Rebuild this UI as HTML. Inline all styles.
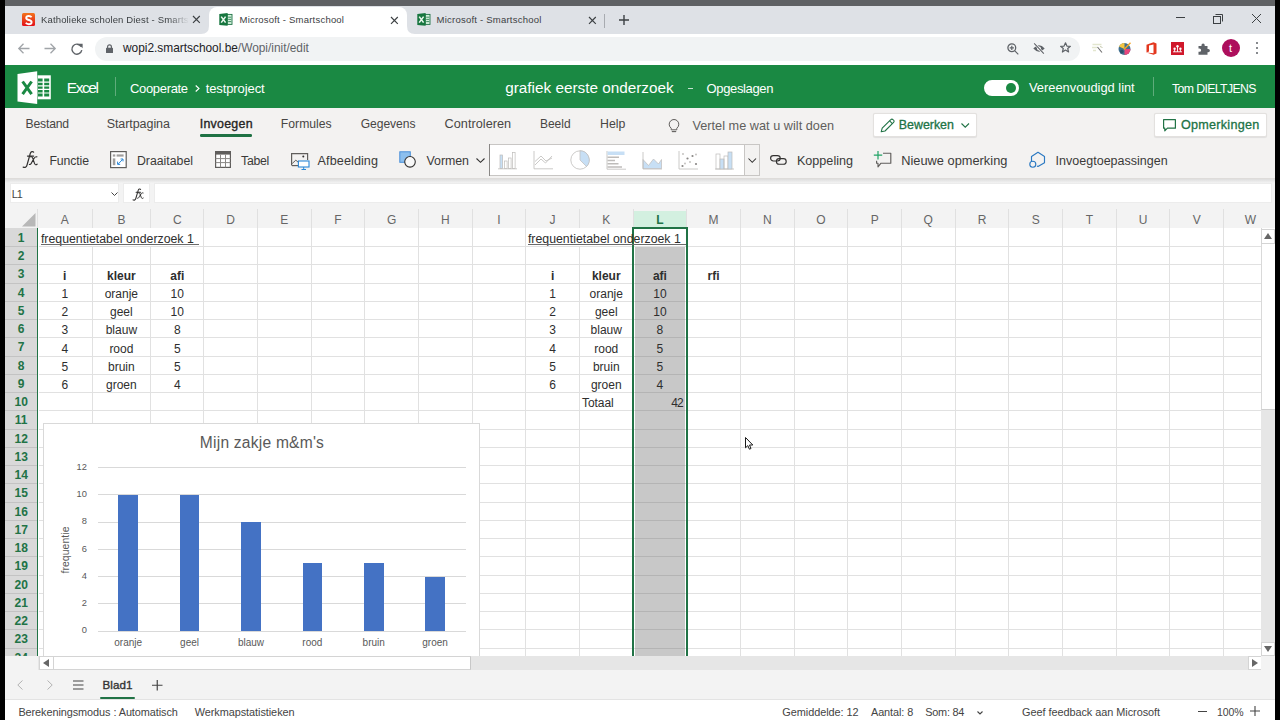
<!DOCTYPE html><html><head><meta charset="utf-8"><style>
html,body{margin:0;padding:0;width:1280px;height:720px;overflow:hidden;background:#fff;position:relative;font-family:"Liberation Sans",sans-serif;}
.t{position:absolute;white-space:pre;line-height:1;}
.r{position:absolute;}
svg{position:absolute;overflow:visible;}
</style></head><body>
<div class="r" style="left:0.00px;top:0.00px;width:1280.00px;height:6.00px;background:#5f6164;"></div>
<div class="r" style="left:5.00px;top:6.00px;width:1270.00px;height:28.00px;background:#dee1e6;"></div>
<div class="r" style="left:5.00px;top:34.00px;width:1270.00px;height:31.00px;background:#ffffff;"></div>
<div class="r" style="left:95.00px;top:37.00px;width:985.00px;height:23.50px;background:#f1f3f4;border-radius:12px;"></div>
<div class="r" style="left:209.00px;top:7.00px;width:198.00px;height:27.00px;background:#ffffff;border-radius:8px 8px 0 0;"></div>
<svg style="left:201px;top:26px" width="8" height="8"><path d="M0 8 Q8 8 8 0 L8 8 Z" fill="#fff"/></svg>
<svg style="left:407px;top:26px" width="8" height="8"><path d="M8 8 Q0 8 0 0 L0 8 Z" fill="#fff"/></svg>
<div class="r" style="left:21.50px;top:13.00px;width:13.50px;height:13.00px;background:linear-gradient(#f3741c,#e3101a);border-radius:1.5px;"></div>
<svg style="left:21.5px;top:13px" width="13.5" height="13"><path d="M9.6 4.2C9 3.4 8 3 6.8 3C5.2 3 4.2 3.8 4.2 5C4.2 7.6 9.6 6.4 9.6 9.2C9.6 10.5 8.4 11.2 6.8 11.2C5.5 11.2 4.4 10.7 3.8 9.8" fill="none" stroke="#fff" stroke-width="1.9"/></svg>
<div class="t" style="left:41.00px;top:14.96px;font-size:9.5px;color:#3c4043;font-weight:normal;letter-spacing:0.155px;width:150px;overflow:hidden;-webkit-mask-image:linear-gradient(90deg,#000 128px,transparent 148px);">Katholieke scholen Diest - Smartschool</div>
<svg style="left:193.3px;top:16.4px" width="6.8" height="6.8"><path d="M0 0L6.8 6.8M6.8 0L0 6.8" stroke="#3c4043" stroke-width="1.15"/></svg>
<svg style="left:391.1px;top:16.6px" width="6.8" height="6.8"><path d="M0 0L6.8 6.8M6.8 0L0 6.8" stroke="#3c4043" stroke-width="1.15"/></svg>
<svg style="left:588.6px;top:16.6px" width="6.8" height="6.8"><path d="M0 0L6.8 6.8M6.8 0L0 6.8" stroke="#3c4043" stroke-width="1.15"/></svg>
<svg style="left:219.2px;top:13.2px" width="14" height="13" viewBox="0 0 14 13"><rect x="8.2" y="1.4" width="4.8" height="10" fill="#d4f2dc" stroke="#1e7145" stroke-width="0.9"/><path d="M9.2 4.2h3M9.2 6.4h3M9.2 8.6h3" stroke="#1e7145" stroke-width="0.8"/><path d="M0.3 0.9 L8.6 0.1 V12.8 L0.3 12.1 Z" fill="#17763f"/><path d="M2.2 3.6L6.6 9.6M6.6 3.6L2.2 9.6" stroke="#eaf7ed" stroke-width="1.6"/></svg>
<svg style="left:417px;top:13.2px" width="14" height="13" viewBox="0 0 14 13"><rect x="8.2" y="1.4" width="4.8" height="10" fill="#d4f2dc" stroke="#1e7145" stroke-width="0.9"/><path d="M9.2 4.2h3M9.2 6.4h3M9.2 8.6h3" stroke="#1e7145" stroke-width="0.8"/><path d="M0.3 0.9 L8.6 0.1 V12.8 L0.3 12.1 Z" fill="#17763f"/><path d="M2.2 3.6L6.6 9.6M6.6 3.6L2.2 9.6" stroke="#eaf7ed" stroke-width="1.6"/></svg>
<div class="t" style="left:239.50px;top:14.96px;font-size:9.5px;color:#3c4043;font-weight:normal;letter-spacing:0.214px;">Microsoft - Smartschool</div>
<div class="t" style="left:436.60px;top:14.96px;font-size:9.5px;color:#3c4043;font-weight:normal;letter-spacing:0.223px;">Microsoft - Smartschool</div>
<div class="r" style="left:604.30px;top:13.50px;width:1.00px;height:14.00px;background:#a8abb0;"></div>
<svg style="left:618.5px;top:15px" width="10" height="10"><path d="M5 0V10M0 5H10" stroke="#3c4043" stroke-width="1.4"/></svg>
<div class="r" style="left:1176.40px;top:17.30px;width:9.00px;height:1.00px;background:#3c4043;"></div>
<svg style="left:1213px;top:13.5px" width="10" height="10"><rect x="0.5" y="2.5" width="7" height="7" fill="none" stroke="#3c4043" stroke-width="1"/><path d="M2.5 0.5H9.5V7.5" fill="none" stroke="#3c4043" stroke-width="1"/></svg>
<svg style="left:1251.5px;top:14px" width="9" height="9"><path d="M0 0L9 9M9 0L0 9" stroke="#3c4043" stroke-width="1"/></svg>
<svg style="left:18px;top:43px" width="12" height="11"><path d="M0.8 5.5H11.5M5.5 0.8L0.8 5.5L5.5 10.2" fill="none" stroke="#a0a4a8" stroke-width="1.3"/></svg>
<svg style="left:44px;top:43px" width="12" height="11"><path d="M0.5 5.5H11.2M6.5 0.8L11.2 5.5L6.5 10.2" fill="none" stroke="#a0a4a8" stroke-width="1.3"/></svg>
<svg style="left:70.5px;top:42.5px" width="12" height="12"><path d="M10.2 3.6A5 5 0 1 0 10.8 7.2" fill="none" stroke="#5f6368" stroke-width="1.4"/><path d="M7.2 0.8L11.6 0.8L11.6 5.2Z" fill="#5f6368"/></svg>
<svg style="left:105.8px;top:44px" width="7" height="9"><path d="M1.6 4V2.8A1.9 1.9 0 0 1 5.4 2.8V4" fill="none" stroke="#5f6368" stroke-width="1.2"/><rect x="0" y="3.8" width="7" height="5.2" rx="0.6" fill="#5f6368"/></svg>
<div class="t" style="left:123.06px;top:42.63px;font-size:11.9px;color:#202124;font-weight:normal;letter-spacing:-0.010px;">wopi2.smartschool.be<span style="color:#5f6368">/Wopi/init/edit</span></div>
<svg style="left:1006.5px;top:42.5px" width="12" height="12"><circle cx="4.8" cy="4.8" r="3.9" fill="none" stroke="#5f6368" stroke-width="1.3"/><path d="M7.6 7.6L11.3 11.3M2.7 4.8H6.9M4.8 2.7V6.9" stroke="#5f6368" stroke-width="1.2"/></svg>
<svg style="left:1032.5px;top:42.5px" width="12" height="11"><path d="M0.3 5.5Q6 -0.8 11.7 5.5Q6 11.8 0.3 5.5Z" fill="#5f6368"/><circle cx="6" cy="5.5" r="1.9" fill="#fff"/><path d="M1.2 0.3L10.8 10.7" stroke="#fff" stroke-width="2.4"/><path d="M1.2 0.3L10.8 10.7" stroke="#5f6368" stroke-width="1.2"/></svg>
<svg style="left:1059.5px;top:42px" width="11" height="11"><path d="M5.5 0.8L6.9 4.1L10.4 4.3L7.7 6.5L8.6 10L5.5 8.1L2.4 10L3.3 6.5L0.6 4.3L4.1 4.1Z" fill="none" stroke="#5f6368" stroke-width="1.2" stroke-linejoin="round"/></svg>
<svg style="left:1091px;top:43px" width="13" height="11"><path d="M1.5 1.5h9M1 4.5h5M2 7.5h3" stroke="#e3e6cf" stroke-width="1.3"/><path d="M6.5 4L11 9.5" stroke="#6b6b6b" stroke-width="1.1"/><path d="M9 3.5L11.5 4.5" stroke="#c4c8ad" stroke-width="1"/></svg>
<svg style="left:1118px;top:42px" width="14" height="13"><circle cx="6.5" cy="7" r="6" fill="#3f6f8f"/><path d="M6.5 7L1 4.6A6 6 0 0 1 6.5 1Z" fill="#f4c542"/><path d="M6.5 7L12.5 7A6 6 0 0 1 6.5 13Z" fill="#e8467c"/><circle cx="3.8" cy="9.6" r="1.8" fill="#2b4f6b"/><path d="M6 7.5L12.5 0.8" stroke="#f5a524" stroke-width="1.4"/></svg>
<svg style="left:1145.5px;top:42px" width="11" height="13"><path d="M0.5 2.8L7.5 0.3L10.5 1.6V11.4L7.5 12.7L0.5 10.4L7.5 11.3V2.4L3 3.6V9.6L0.5 10.4Z" fill="#e3371e"/></svg>
<svg style="left:1171px;top:42px" width="13" height="13"><rect width="13" height="13" fill="#d0182b"/><circle cx="6.5" cy="4.2" r="1.2" fill="#fff"/><circle cx="3.6" cy="6.8" r="1.2" fill="#fff"/><circle cx="9.4" cy="6.8" r="1.2" fill="#fff"/><path d="M2 9.8h9M6.5 5v4.8M3.6 7.8v2M9.4 7.8v2" stroke="#fff" stroke-width="0.9"/></svg>
<svg style="left:1198px;top:42.5px" width="12" height="12"><path d="M0.5 3H3.5V2A1.6 1.6 0 0 1 6.7 2V3H9.5V6H10.3A1.6 1.6 0 0 1 10.3 9.2H9.5V11.8H0.5V8.8H1.5A1.6 1.6 0 0 0 1.5 5.6H0.5Z" fill="#5f6368"/></svg>
<div class="r" style="left:1222.00px;top:39.20px;width:18.00px;height:18.00px;background:#ad0f5c;border-radius:50%;"></div>
<div class="t" style="left:1229.00px;top:42.89px;font-size:11px;color:#fff;font-weight:normal;letter-spacing:0.000px;">t</div>
<div class="r" style="left:1256.00px;top:42.10px;width:2.30px;height:2.30px;background:#5f6368;border-radius:50%;"></div>
<div class="r" style="left:1256.00px;top:47.10px;width:2.30px;height:2.30px;background:#5f6368;border-radius:50%;"></div>
<div class="r" style="left:1256.00px;top:52.10px;width:2.30px;height:2.30px;background:#5f6368;border-radius:50%;"></div>
<div class="r" style="left:5.00px;top:65.00px;width:1270.00px;height:43.00px;background:#1a8943;"></div>
<svg style="left:17px;top:71px" width="35" height="34" viewBox="0 0 35 34"><path d="M20.6 4.3H33.8V28.3H20.6Z" fill="#fff"/><path d="M21 7.5h4.6v3h-4.6zM27.2 7.5h5v3h-5zM21 11.8h4.6v2.4h-4.6zM27.2 11.8h5v2.4h-5zM21 15.4h4.6v2.4h-4.6zM27.2 15.4h5v2.4h-5zM21 19h4.6v2.4h-4.6zM27.2 19h5v2.4h-5zM21 22.6h4.6v2.8h-4.6zM27.2 22.6h5v2.8h-5z" fill="#1a8943"/><path d="M0.5 3 L20.2 0.2 L20.2 33 L0.5 30.6Z" fill="#fff"/><path d="M5.6 10.5L14.6 23.1M14.6 10.5L5.6 23.1" stroke="#1a8943" stroke-width="3"/></svg>
<div class="t" style="left:66.70px;top:79.78px;font-size:15.5px;color:#fff;font-weight:normal;letter-spacing:-1.399px;">Excel</div>
<div class="r" style="left:115.00px;top:77.30px;width:1.00px;height:18.70px;background:rgba(255,255,255,0.3);"></div>
<div class="t" style="left:129.90px;top:82.10px;font-size:13px;color:#fff;font-weight:normal;letter-spacing:-0.314px;">Cooperate</div>
<svg style="left:195px;top:84.5px" width="5" height="7"><path d="M0.7 0.5L4 3.5L0.7 6.5" fill="none" stroke="#fff" stroke-width="1.1"/></svg>
<div class="t" style="left:205.70px;top:82.10px;font-size:13px;color:#fff;font-weight:normal;letter-spacing:-0.100px;">testproject</div>
<div class="t" style="left:505.20px;top:80.05px;font-size:15.3px;color:#fff;font-weight:normal;letter-spacing:0.006px;">grafiek eerste onderzoek</div>
<div class="r" style="left:687.50px;top:88.00px;width:5.00px;height:1.20px;background:rgba(255,255,255,0.75);"></div>
<div class="t" style="left:706.60px;top:82.00px;font-size:13px;color:#fff;font-weight:normal;letter-spacing:-0.371px;">Opgeslagen</div>
<div class="r" style="left:984.00px;top:79.60px;width:35.00px;height:16.40px;background:#fff;border-radius:8.2px;"></div>
<div class="r" style="left:1005.90px;top:83.00px;width:9.80px;height:9.80px;background:#1a8943;border-radius:50%;"></div>
<div class="t" style="left:1029.00px;top:82.28px;font-size:12.9px;color:#fff;font-weight:normal;letter-spacing:-0.022px;">Vereenvoudigd lint</div>
<div class="r" style="left:1153.30px;top:77.30px;width:1.00px;height:18.70px;background:rgba(255,255,255,0.3);"></div>
<div class="t" style="left:1172.00px;top:82.59px;font-size:12.3px;color:#fff;font-weight:normal;letter-spacing:-0.630px;">Tom DIELTJENS</div>
<div class="r" style="left:5.00px;top:108.00px;width:1270.00px;height:70.00px;background:#f3f2f1;"></div>
<div class="r" style="left:5.00px;top:177.50px;width:1270.00px;height:1.00px;background:#dedcda;"></div>
<div class="t" style="left:25.60px;top:118.07px;font-size:12.2px;color:#484644;font-weight:normal;letter-spacing:-0.196px;">Bestand</div>
<div class="t" style="left:106.70px;top:117.82px;font-size:12.5px;color:#484644;font-weight:normal;letter-spacing:-0.070px;">Startpagina</div>
<div class="t" style="left:199.70px;top:117.90px;font-size:12.4px;color:#252423;font-weight:normal;-webkit-text-stroke:0.35px #252423;letter-spacing:0.268px;">Invoegen</div>
<div class="t" style="left:280.80px;top:118.07px;font-size:12.2px;color:#484644;font-weight:normal;letter-spacing:0.018px;">Formules</div>
<div class="t" style="left:360.70px;top:118.16px;font-size:12.1px;color:#484644;font-weight:normal;letter-spacing:-0.054px;">Gegevens</div>
<div class="t" style="left:444.60px;top:117.65px;font-size:12.7px;color:#484644;font-weight:normal;letter-spacing:0.024px;">Controleren</div>
<div class="t" style="left:540.00px;top:118.24px;font-size:12px;color:#484644;font-weight:normal;letter-spacing:-0.030px;">Beeld</div>
<div class="t" style="left:600.00px;top:117.99px;font-size:12.3px;color:#484644;font-weight:normal;letter-spacing:0.041px;">Help</div>
<div class="r" style="left:199.70px;top:134.30px;width:52.50px;height:2.70px;background:#1f7244;border-radius:1.3px;"></div>
<svg style="left:667.5px;top:118px" width="12" height="15"><path d="M3.2 10.2A4.8 4.8 0 1 1 8.8 10.2V11.8H3.2Z" fill="none" stroke="#605e5c" stroke-width="1"/><path d="M3.8 13.6h4.4" stroke="#605e5c" stroke-width="1.1"/></svg>
<div class="t" style="left:692.40px;top:120.45px;font-size:12.7px;color:#605e5c;font-weight:normal;letter-spacing:0.027px;">Vertel me wat u wilt doen</div>
<div class="r" style="left:872.60px;top:112.60px;width:104.30px;height:24.70px;background:#fff;border:1px solid #e3e1df;border-radius:2px;box-sizing:border-box;box-shadow:0 0.5px 1px rgba(0,0,0,0.08);"></div>
<svg style="left:880px;top:117.5px" width="16" height="15"><path d="M1.2 13.8L2.2 10.2L10.8 1.6A1.5 1.5 0 0 1 13 1.6L13.6 2.2A1.5 1.5 0 0 1 13.6 4.4L5 13Z" fill="none" stroke="#217346" stroke-width="1.1" stroke-linejoin="round"/><path d="M9.6 2.8L12.4 5.6" stroke="#217346" stroke-width="1.1"/></svg>
<div class="t" style="left:898.80px;top:118.80px;font-size:12.4px;color:#217346;font-weight:normal;-webkit-text-stroke:0.3px #217346;letter-spacing:-0.003px;">Bewerken</div>
<svg style="left:961px;top:123px" width="8.5" height="5"><path d="M0.5 0.5L4.25 4.2L8 0.5" fill="none" stroke="#217346" stroke-width="1.1"/></svg>
<div class="r" style="left:1154.20px;top:112.60px;width:113.30px;height:24.70px;background:#fff;border:1px solid #e3e1df;border-radius:2px;box-sizing:border-box;box-shadow:0 0.5px 1px rgba(0,0,0,0.08);"></div>
<svg style="left:1163px;top:119px" width="13" height="12.5"><path d="M0.6 0.6H12.4V9.2H4.4L1.8 11.8V9.2H0.6Z" fill="none" stroke="#217346" stroke-width="1.2" stroke-linejoin="round"/></svg>
<div class="t" style="left:1181.00px;top:118.53px;font-size:12.6px;color:#217346;font-weight:normal;-webkit-text-stroke:0.3px #217346;letter-spacing:0.264px;">Opmerkingen</div>
<svg style="left:22px;top:150px" width="16" height="19"><path d="M11.6 2.2C10.8 1.1 8.9 1.3 8.3 3.4L5 15.2C4.5 17.1 2.9 18 1.2 17.1M5.5 6H11.6" fill="none" stroke="#323130" stroke-width="1.25" stroke-linecap="round"/><path d="M8.6 6.8C9.6 6.3 10.2 6.9 10.8 8.4L12.5 13.4C13 14.9 14 15.1 15.1 14.2M14.9 6.9C13.7 6.4 12.7 7.4 12 8.4L9.7 12.4C9 13.9 8.2 14.9 7.4 14.4" fill="none" stroke="#323130" stroke-width="1.15" stroke-linecap="round"/></svg>
<div class="t" style="left:49.50px;top:155.09px;font-size:12.3px;color:#3b3a39;font-weight:normal;letter-spacing:-0.141px;">Functie</div>
<svg style="left:110px;top:151px" width="17" height="17"><rect x="0.6" y="0.6" width="15.6" height="16" fill="#fff" stroke="#605e5c" stroke-width="1.2"/><rect x="2.8" y="3.4" width="2.5" height="2.2" fill="#a19f9d"/><rect x="6.6" y="3.4" width="7" height="2.2" fill="#a19f9d"/><rect x="2.8" y="7.4" width="2.5" height="6.8" fill="#a19f9d"/><path d="M8.2 13L12.6 8.4M10.6 8H13V10.4M7.6 10.6V13.4H10.2" fill="none" stroke="#2b88d8" stroke-width="1"/></svg>
<div class="t" style="left:136.90px;top:155.09px;font-size:12.3px;color:#3b3a39;font-weight:normal;letter-spacing:0.012px;">Draaitabel</div>
<svg style="left:215px;top:151px" width="16" height="17"><rect x="0.6" y="0.6" width="14.8" height="15.8" fill="#fff" stroke="#605e5c" stroke-width="1.2"/><rect x="0.6" y="0.6" width="14.8" height="3" fill="#605e5c"/><path d="M0.6 7.6H15.4M0.6 11.6H15.4M5.5 3.6V16.4M10.5 3.6V16.4" stroke="#8a8886" stroke-width="1"/></svg>
<div class="t" style="left:241.10px;top:155.09px;font-size:12.3px;color:#3b3a39;font-weight:normal;letter-spacing:-0.324px;">Tabel</div>
<svg style="left:291px;top:153px" width="19" height="17"><path d="M0.6 12.6V0.6H16.6V7" fill="none" stroke="#605e5c" stroke-width="1.2"/><path d="M1 12.6H7" stroke="#605e5c" stroke-width="1.2"/><path d="M1.2 10.5L4.8 7.2L7.5 9.5" fill="none" stroke="#605e5c" stroke-width="1"/><circle cx="12.3" cy="3.6" r="1" fill="#323130"/><rect x="7.4" y="8" width="10.6" height="6" fill="#fff" stroke="#2b88d8" stroke-width="1.1"/><path d="M12.7 14V16.5M10.5 16.5H15" stroke="#2b88d8" stroke-width="1"/></svg>
<div class="t" style="left:317.60px;top:154.83px;font-size:12.6px;color:#3b3a39;font-weight:normal;letter-spacing:0.096px;">Afbeelding</div>
<svg style="left:399px;top:151px" width="18" height="17"><rect x="0.8" y="0.8" width="10.5" height="10.5" fill="#8cbfee" stroke="#4a90d9" stroke-width="1"/><circle cx="11" cy="10.8" r="5.3" fill="#f8f8f8" stroke="#323130" stroke-width="1.1"/></svg>
<div class="t" style="left:426.50px;top:155.00px;font-size:12.4px;color:#3b3a39;font-weight:normal;letter-spacing:-0.044px;">Vormen</div>
<svg style="left:476.3px;top:157.5px" width="9" height="5"><path d="M0.5 0.5L4.5 4.3L8.5 0.5" fill="none" stroke="#323130" stroke-width="1.05"/></svg>
<div class="r" style="left:489.20px;top:143.50px;width:271.20px;height:32.20px;background:#fff;border:1px solid #c8c6c4;box-sizing:border-box;"></div>
<div class="r" style="left:489.20px;top:143.50px;width:1.20px;height:32.20px;background:#8a8886;"></div>
<div class="r" style="left:744.40px;top:144.50px;width:1.00px;height:30.20px;background:#c8c6c4;"></div>
<div class="r" style="left:745.40px;top:144.50px;width:14.00px;height:30.20px;background:#f3f2f1;"></div>
<svg style="left:747.8px;top:157.5px" width="8.5" height="5"><path d="M0.5 0.5L4.25 4.3L8 0.5" fill="none" stroke="#323130" stroke-width="1.05"/></svg>
<svg style="left:497px;top:150px" width="20" height="20"><rect x="3" y="5" width="2.6" height="13.5" fill="#c7dff5" stroke="#bebcba" stroke-width="0.7"/><rect x="7.5" y="11" width="2.6" height="7.5" fill="none" stroke="#bebcba" stroke-width="0.7"/><rect x="11.5" y="8" width="2.6" height="10.5" fill="none" stroke="#bebcba" stroke-width="0.7"/><rect x="15.5" y="2.5" width="2.6" height="16" fill="none" stroke="#bebcba" stroke-width="0.7"/><path d="M1 18.8H20" stroke="#bebcba" stroke-width="0.8"/></svg>
<svg style="left:533px;top:150px" width="20" height="20"><path d="M1 1V18.8H20" fill="none" stroke="#bebcba" stroke-width="0.8"/><path d="M2 15L8 9L12.5 13L19 6M2 11.5L8 6L13 11L19 8" fill="none" stroke="#bebcba" stroke-width="0.8"/></svg>
<svg style="left:570px;top:150px" width="21" height="21"><circle cx="10" cy="10" r="9.2" fill="#fff" stroke="#bebcba" stroke-width="0.8"/><path d="M10 10V0.8A9.2 9.2 0 0 1 16.5 16.5Z" fill="#c7dff5" stroke="#bebcba" stroke-width="0.7"/></svg>
<svg style="left:606px;top:150px" width="21" height="20"><path d="M1 1V19.2" stroke="#bebcba" stroke-width="0.8"/><rect x="1.5" y="1.5" width="17" height="3.5" fill="#c7dff5"/><path d="M1.5 7.2H13M1.5 10.5H9M1.5 13.8H12.5M1.5 17H16" stroke="#bebcba" stroke-width="1.5"/><path d="M1 19.2H20" stroke="#bebcba" stroke-width="0.8"/></svg>
<svg style="left:642px;top:150px" width="21" height="20"><path d="M1 19H20" fill="none" stroke="#bebcba" stroke-width="0.8"/><path d="M1 9.5L6.5 15.5L11.5 9L16.5 14L19.5 9.5V18.5H1Z" fill="#c7dff5" stroke="#bebcba" stroke-width="0.7"/><path d="M1 2V19" stroke="#bebcba" stroke-width="0.8"/></svg>
<svg style="left:678px;top:150px" width="21" height="20"><path d="M1 1V19H20" fill="none" stroke="#bebcba" stroke-width="0.8"/><circle cx="5" cy="4" r="0.9" fill="#bebcba"/><circle cx="9.5" cy="8.5" r="1.1" fill="#8a8886"/><circle cx="14.5" cy="6" r="1.1" fill="#8a8886"/><circle cx="7" cy="13.5" r="0.9" fill="#bebcba"/><circle cx="12" cy="12" r="0.9" fill="#bebcba"/><circle cx="18" cy="14" r="1.1" fill="#8a8886"/><circle cx="18" cy="4.5" r="0.9" fill="#bebcba"/><circle cx="4.5" cy="16" r="1.1" fill="#8a8886"/></svg>
<svg style="left:714px;top:150px" width="21" height="20"><path d="M1 19H20" stroke="#bebcba" stroke-width="0.8"/><rect x="2" y="4" width="4" height="15" fill="none" stroke="#bebcba" stroke-width="0.7"/><rect x="6" y="9" width="4" height="10" fill="#c7dff5" stroke="#bebcba" stroke-width="0.7"/><rect x="10" y="6" width="4" height="13" fill="none" stroke="#bebcba" stroke-width="0.7"/><rect x="14" y="2" width="4" height="17" fill="#c7dff5" stroke="#bebcba" stroke-width="0.7"/></svg>
<svg style="left:770px;top:154.5px" width="17" height="10"><rect x="0.6" y="0.6" width="9.6" height="5.4" rx="2.7" fill="none" stroke="#323130" stroke-width="1.15"/><rect x="6.4" y="3.6" width="9.8" height="5.6" rx="2.8" fill="none" stroke="#323130" stroke-width="1.15"/></svg>
<div class="t" style="left:796.90px;top:154.83px;font-size:12.6px;color:#3b3a39;font-weight:normal;letter-spacing:0.016px;">Koppeling</div>
<svg style="left:873px;top:150.5px" width="19" height="17"><path d="M5 0V8.5M0.8 4.2H9.2" stroke="#21a366" stroke-width="1.2"/><path d="M10 2.2H17.8V12.2H8L5 15.8V12.2H3.6V9.8" fill="none" stroke="#605e5c" stroke-width="1.15" stroke-linejoin="round"/></svg>
<div class="t" style="left:901.20px;top:154.66px;font-size:12.8px;color:#3b3a39;font-weight:normal;letter-spacing:0.014px;">Nieuwe opmerking</div>
<svg style="left:1029px;top:150.5px" width="18" height="17"><path d="M6.2 12.5L2.5 10.5V5.5L9 1.3L15.5 5.5V11.7L9 15.5L8 15" fill="none" stroke="#2b79c2" stroke-width="1.15" stroke-linejoin="round"/><circle cx="3.8" cy="13.2" r="3" fill="#f3f2f1" stroke="#2b79c2" stroke-width="1.15"/></svg>
<div class="t" style="left:1055.60px;top:154.92px;font-size:12.5px;color:#3b3a39;font-weight:normal;letter-spacing:0.013px;">Invoegtoepassingen</div>
<div class="r" style="left:5.00px;top:178.50px;width:1270.00px;height:32.00px;background:#f3f3f3;"></div>
<div class="r" style="left:5.00px;top:178.50px;width:1270.00px;height:4.00px;background:linear-gradient(rgba(0,0,0,0.09),rgba(0,0,0,0));"></div>
<div class="r" style="left:10.00px;top:183.00px;width:109.00px;height:20.00px;background:#fff;border:1px solid #ececec;box-sizing:border-box;"></div>
<div class="t" style="left:11.80px;top:188.66px;font-size:10.8px;color:#444;font-weight:normal;letter-spacing:-0.988px;">L1</div>
<svg style="left:111px;top:192px" width="7" height="4.5"><path d="M0.5 0.5L3.5 3.5L6.5 0.5" fill="none" stroke="#444" stroke-width="1"/></svg>
<div class="r" style="left:123.00px;top:183.00px;width:27.00px;height:20.00px;background:#fff;border:1px solid #ececec;box-sizing:border-box;"></div>
<svg style="left:131.5px;top:188px" width="13" height="13"><path d="M8.6 1.4C8 0.6 6.6 0.8 6.2 2.3L3.8 10.5C3.4 11.9 2.2 12.5 1 11.9M4.1 4.2H8.6" fill="none" stroke="#323130" stroke-width="1.05" stroke-linecap="round"/><path d="M6.4 4.8C7.1 4.4 7.6 4.9 8 6L9.3 9.5C9.7 10.6 10.4 10.7 11.2 10.1M11.1 4.9C10.2 4.5 9.5 5.2 9 6L7.2 8.8C6.7 9.9 6.1 10.6 5.5 10.3" fill="none" stroke="#323130" stroke-width="1" stroke-linecap="round"/></svg>
<div class="r" style="left:154.00px;top:183.00px;width:1118.00px;height:20.00px;background:#fff;border:1px solid #ececec;box-sizing:border-box;"></div>
<div class="r" style="left:5.00px;top:203.50px;width:1270.00px;height:25.00px;background:#f3f3f3;"></div>
<svg style="left:22px;top:213px" width="14" height="14"><path d="M13.5 0V13.5H0Z" fill="#b8b8b8"/></svg>
<div class="r" style="left:37.00px;top:208.50px;width:1.00px;height:20.00px;background:#e0e0e0;"></div>
<div class="r" style="left:91.50px;top:208.50px;width:1.00px;height:20.00px;background:#e0e0e0;"></div>
<div class="r" style="left:150.25px;top:208.50px;width:1.00px;height:20.00px;background:#e0e0e0;"></div>
<div class="r" style="left:203.25px;top:208.50px;width:1.00px;height:20.00px;background:#e0e0e0;"></div>
<div class="r" style="left:256.92px;top:208.50px;width:1.00px;height:20.00px;background:#e0e0e0;"></div>
<div class="r" style="left:310.59px;top:208.50px;width:1.00px;height:20.00px;background:#e0e0e0;"></div>
<div class="r" style="left:364.26px;top:208.50px;width:1.00px;height:20.00px;background:#e0e0e0;"></div>
<div class="r" style="left:417.93px;top:208.50px;width:1.00px;height:20.00px;background:#e0e0e0;"></div>
<div class="r" style="left:471.60px;top:208.50px;width:1.00px;height:20.00px;background:#e0e0e0;"></div>
<div class="r" style="left:525.27px;top:208.50px;width:1.00px;height:20.00px;background:#e0e0e0;"></div>
<div class="r" style="left:578.94px;top:208.50px;width:1.00px;height:20.00px;background:#e0e0e0;"></div>
<div class="r" style="left:632.61px;top:208.50px;width:1.00px;height:20.00px;background:#e0e0e0;"></div>
<div class="r" style="left:686.28px;top:208.50px;width:1.00px;height:20.00px;background:#e0e0e0;"></div>
<div class="r" style="left:739.95px;top:208.50px;width:1.00px;height:20.00px;background:#e0e0e0;"></div>
<div class="r" style="left:793.62px;top:208.50px;width:1.00px;height:20.00px;background:#e0e0e0;"></div>
<div class="r" style="left:847.29px;top:208.50px;width:1.00px;height:20.00px;background:#e0e0e0;"></div>
<div class="r" style="left:900.96px;top:208.50px;width:1.00px;height:20.00px;background:#e0e0e0;"></div>
<div class="r" style="left:954.63px;top:208.50px;width:1.00px;height:20.00px;background:#e0e0e0;"></div>
<div class="r" style="left:1008.30px;top:208.50px;width:1.00px;height:20.00px;background:#e0e0e0;"></div>
<div class="r" style="left:1061.97px;top:208.50px;width:1.00px;height:20.00px;background:#e0e0e0;"></div>
<div class="r" style="left:1115.64px;top:208.50px;width:1.00px;height:20.00px;background:#e0e0e0;"></div>
<div class="r" style="left:1169.31px;top:208.50px;width:1.00px;height:20.00px;background:#e0e0e0;"></div>
<div class="r" style="left:1222.98px;top:208.50px;width:1.00px;height:20.00px;background:#e0e0e0;"></div>
<div class="r" style="left:5.00px;top:227.80px;width:1256.30px;height:1.00px;background:#d6d6d6;"></div>
<div class="r" style="left:633.61px;top:211.00px;width:52.67px;height:17.00px;background:#d3f0e0;"></div>
<div class="t" style="left:60.73px;top:213.64px;font-size:12px;color:#666666;font-weight:normal;">A</div>
<div class="t" style="left:117.39px;top:213.64px;font-size:12px;color:#666666;font-weight:normal;">B</div>
<div class="t" style="left:172.93px;top:213.64px;font-size:12px;color:#666666;font-weight:normal;">C</div>
<div class="t" style="left:226.27px;top:213.64px;font-size:12px;color:#666666;font-weight:normal;">D</div>
<div class="t" style="left:280.26px;top:213.64px;font-size:12px;color:#666666;font-weight:normal;">E</div>
<div class="t" style="left:334.26px;top:213.64px;font-size:12px;color:#666666;font-weight:normal;">F</div>
<div class="t" style="left:386.92px;top:213.64px;font-size:12px;color:#666666;font-weight:normal;">G</div>
<div class="t" style="left:440.94px;top:213.64px;font-size:12px;color:#666666;font-weight:normal;">H</div>
<div class="t" style="left:497.25px;top:213.64px;font-size:12px;color:#666666;font-weight:normal;">I</div>
<div class="t" style="left:549.61px;top:213.64px;font-size:12px;color:#666666;font-weight:normal;">J</div>
<div class="t" style="left:602.29px;top:213.64px;font-size:12px;color:#666666;font-weight:normal;">K</div>
<div class="t" style="left:656.28px;top:213.64px;font-size:12px;color:#217346;font-weight:bold;">L</div>
<div class="t" style="left:708.61px;top:213.64px;font-size:12px;color:#666666;font-weight:normal;">M</div>
<div class="t" style="left:762.97px;top:213.64px;font-size:12px;color:#666666;font-weight:normal;">N</div>
<div class="t" style="left:816.27px;top:213.64px;font-size:12px;color:#666666;font-weight:normal;">O</div>
<div class="t" style="left:870.63px;top:213.64px;font-size:12px;color:#666666;font-weight:normal;">P</div>
<div class="t" style="left:923.62px;top:213.64px;font-size:12px;color:#666666;font-weight:normal;">Q</div>
<div class="t" style="left:977.64px;top:213.64px;font-size:12px;color:#666666;font-weight:normal;">R</div>
<div class="t" style="left:1031.64px;top:213.64px;font-size:12px;color:#666666;font-weight:normal;">S</div>
<div class="t" style="left:1085.64px;top:213.64px;font-size:12px;color:#666666;font-weight:normal;">T</div>
<div class="t" style="left:1138.65px;top:213.64px;font-size:12px;color:#666666;font-weight:normal;">U</div>
<div class="t" style="left:1192.65px;top:213.64px;font-size:12px;color:#666666;font-weight:normal;">V</div>
<div class="t" style="left:1244.64px;top:213.64px;font-size:12px;color:#666666;font-weight:normal;">W</div>
<div class="r" style="left:37.50px;top:228.30px;width:1223.80px;height:427.70px;background:#fff;"></div>
<div class="r" style="left:38.50px;top:246.05px;width:1222.80px;height:1.00px;background:#e1e1e1;"></div>
<div class="r" style="left:38.50px;top:264.30px;width:1222.80px;height:1.00px;background:#e1e1e1;"></div>
<div class="r" style="left:38.50px;top:282.55px;width:1222.80px;height:1.00px;background:#e1e1e1;"></div>
<div class="r" style="left:38.50px;top:300.80px;width:1222.80px;height:1.00px;background:#e1e1e1;"></div>
<div class="r" style="left:38.50px;top:319.05px;width:1222.80px;height:1.00px;background:#e1e1e1;"></div>
<div class="r" style="left:38.50px;top:337.30px;width:1222.80px;height:1.00px;background:#e1e1e1;"></div>
<div class="r" style="left:38.50px;top:355.55px;width:1222.80px;height:1.00px;background:#e1e1e1;"></div>
<div class="r" style="left:38.50px;top:373.80px;width:1222.80px;height:1.00px;background:#e1e1e1;"></div>
<div class="r" style="left:38.50px;top:392.05px;width:1222.80px;height:1.00px;background:#e1e1e1;"></div>
<div class="r" style="left:38.50px;top:410.30px;width:1222.80px;height:1.00px;background:#e1e1e1;"></div>
<div class="r" style="left:38.50px;top:428.55px;width:1222.80px;height:1.00px;background:#e1e1e1;"></div>
<div class="r" style="left:38.50px;top:446.80px;width:1222.80px;height:1.00px;background:#e1e1e1;"></div>
<div class="r" style="left:38.50px;top:465.05px;width:1222.80px;height:1.00px;background:#e1e1e1;"></div>
<div class="r" style="left:38.50px;top:483.30px;width:1222.80px;height:1.00px;background:#e1e1e1;"></div>
<div class="r" style="left:38.50px;top:501.55px;width:1222.80px;height:1.00px;background:#e1e1e1;"></div>
<div class="r" style="left:38.50px;top:519.80px;width:1222.80px;height:1.00px;background:#e1e1e1;"></div>
<div class="r" style="left:38.50px;top:538.05px;width:1222.80px;height:1.00px;background:#e1e1e1;"></div>
<div class="r" style="left:38.50px;top:556.30px;width:1222.80px;height:1.00px;background:#e1e1e1;"></div>
<div class="r" style="left:38.50px;top:574.55px;width:1222.80px;height:1.00px;background:#e1e1e1;"></div>
<div class="r" style="left:38.50px;top:592.80px;width:1222.80px;height:1.00px;background:#e1e1e1;"></div>
<div class="r" style="left:38.50px;top:611.05px;width:1222.80px;height:1.00px;background:#e1e1e1;"></div>
<div class="r" style="left:38.50px;top:629.30px;width:1222.80px;height:1.00px;background:#e1e1e1;"></div>
<div class="r" style="left:38.50px;top:647.55px;width:1222.80px;height:1.00px;background:#e1e1e1;"></div>
<div class="r" style="left:91.50px;top:246.05px;width:1.00px;height:409.95px;background:#e1e1e1;"></div>
<div class="r" style="left:150.25px;top:246.05px;width:1.00px;height:409.95px;background:#e1e1e1;"></div>
<div class="r" style="left:203.25px;top:228.30px;width:1.00px;height:427.70px;background:#e1e1e1;"></div>
<div class="r" style="left:256.92px;top:228.30px;width:1.00px;height:427.70px;background:#e1e1e1;"></div>
<div class="r" style="left:310.59px;top:228.30px;width:1.00px;height:427.70px;background:#e1e1e1;"></div>
<div class="r" style="left:364.26px;top:228.30px;width:1.00px;height:427.70px;background:#e1e1e1;"></div>
<div class="r" style="left:417.93px;top:228.30px;width:1.00px;height:427.70px;background:#e1e1e1;"></div>
<div class="r" style="left:471.60px;top:228.30px;width:1.00px;height:427.70px;background:#e1e1e1;"></div>
<div class="r" style="left:525.27px;top:228.30px;width:1.00px;height:427.70px;background:#e1e1e1;"></div>
<div class="r" style="left:578.94px;top:246.05px;width:1.00px;height:409.95px;background:#e1e1e1;"></div>
<div class="r" style="left:632.61px;top:228.30px;width:1.00px;height:427.70px;background:#e1e1e1;"></div>
<div class="r" style="left:686.28px;top:228.30px;width:1.00px;height:427.70px;background:#e1e1e1;"></div>
<div class="r" style="left:739.95px;top:228.30px;width:1.00px;height:427.70px;background:#e1e1e1;"></div>
<div class="r" style="left:793.62px;top:228.30px;width:1.00px;height:427.70px;background:#e1e1e1;"></div>
<div class="r" style="left:847.29px;top:228.30px;width:1.00px;height:427.70px;background:#e1e1e1;"></div>
<div class="r" style="left:900.96px;top:228.30px;width:1.00px;height:427.70px;background:#e1e1e1;"></div>
<div class="r" style="left:954.63px;top:228.30px;width:1.00px;height:427.70px;background:#e1e1e1;"></div>
<div class="r" style="left:1008.30px;top:228.30px;width:1.00px;height:427.70px;background:#e1e1e1;"></div>
<div class="r" style="left:1061.97px;top:228.30px;width:1.00px;height:427.70px;background:#e1e1e1;"></div>
<div class="r" style="left:1115.64px;top:228.30px;width:1.00px;height:427.70px;background:#e1e1e1;"></div>
<div class="r" style="left:1169.31px;top:228.30px;width:1.00px;height:427.70px;background:#e1e1e1;"></div>
<div class="r" style="left:1222.98px;top:228.30px;width:1.00px;height:427.70px;background:#e1e1e1;"></div>
<div class="r" style="left:5.00px;top:228.30px;width:32.30px;height:427.70px;background:#d9d9d9;"></div>
<div class="r" style="left:5.00px;top:246.05px;width:32.30px;height:1.00px;background:#c3c3c3;"></div>
<div class="t" style="left:17.82px;top:231.84px;font-size:12px;color:#217346;font-weight:bold;">1</div>
<div class="r" style="left:5.00px;top:264.30px;width:32.30px;height:1.00px;background:#c3c3c3;"></div>
<div class="t" style="left:17.82px;top:250.09px;font-size:12px;color:#217346;font-weight:bold;">2</div>
<div class="r" style="left:5.00px;top:282.55px;width:32.30px;height:1.00px;background:#c3c3c3;"></div>
<div class="t" style="left:17.82px;top:268.34px;font-size:12px;color:#217346;font-weight:bold;">3</div>
<div class="r" style="left:5.00px;top:300.80px;width:32.30px;height:1.00px;background:#c3c3c3;"></div>
<div class="t" style="left:17.82px;top:286.59px;font-size:12px;color:#217346;font-weight:bold;">4</div>
<div class="r" style="left:5.00px;top:319.05px;width:32.30px;height:1.00px;background:#c3c3c3;"></div>
<div class="t" style="left:17.82px;top:304.84px;font-size:12px;color:#217346;font-weight:bold;">5</div>
<div class="r" style="left:5.00px;top:337.30px;width:32.30px;height:1.00px;background:#c3c3c3;"></div>
<div class="t" style="left:17.82px;top:323.09px;font-size:12px;color:#217346;font-weight:bold;">6</div>
<div class="r" style="left:5.00px;top:355.55px;width:32.30px;height:1.00px;background:#c3c3c3;"></div>
<div class="t" style="left:17.82px;top:341.34px;font-size:12px;color:#217346;font-weight:bold;">7</div>
<div class="r" style="left:5.00px;top:373.80px;width:32.30px;height:1.00px;background:#c3c3c3;"></div>
<div class="t" style="left:17.82px;top:359.59px;font-size:12px;color:#217346;font-weight:bold;">8</div>
<div class="r" style="left:5.00px;top:392.05px;width:32.30px;height:1.00px;background:#c3c3c3;"></div>
<div class="t" style="left:17.82px;top:377.84px;font-size:12px;color:#217346;font-weight:bold;">9</div>
<div class="r" style="left:5.00px;top:410.30px;width:32.30px;height:1.00px;background:#c3c3c3;"></div>
<div class="t" style="left:14.49px;top:396.09px;font-size:12px;color:#217346;font-weight:bold;">10</div>
<div class="r" style="left:5.00px;top:428.55px;width:32.30px;height:1.00px;background:#c3c3c3;"></div>
<div class="t" style="left:14.82px;top:414.34px;font-size:12px;color:#217346;font-weight:bold;">11</div>
<div class="r" style="left:5.00px;top:446.80px;width:32.30px;height:1.00px;background:#c3c3c3;"></div>
<div class="t" style="left:14.49px;top:432.59px;font-size:12px;color:#217346;font-weight:bold;">12</div>
<div class="r" style="left:5.00px;top:465.05px;width:32.30px;height:1.00px;background:#c3c3c3;"></div>
<div class="t" style="left:14.49px;top:450.84px;font-size:12px;color:#217346;font-weight:bold;">13</div>
<div class="r" style="left:5.00px;top:483.30px;width:32.30px;height:1.00px;background:#c3c3c3;"></div>
<div class="t" style="left:14.49px;top:469.09px;font-size:12px;color:#217346;font-weight:bold;">14</div>
<div class="r" style="left:5.00px;top:501.55px;width:32.30px;height:1.00px;background:#c3c3c3;"></div>
<div class="t" style="left:14.49px;top:487.34px;font-size:12px;color:#217346;font-weight:bold;">15</div>
<div class="r" style="left:5.00px;top:519.80px;width:32.30px;height:1.00px;background:#c3c3c3;"></div>
<div class="t" style="left:14.49px;top:505.59px;font-size:12px;color:#217346;font-weight:bold;">16</div>
<div class="r" style="left:5.00px;top:538.05px;width:32.30px;height:1.00px;background:#c3c3c3;"></div>
<div class="t" style="left:14.49px;top:523.84px;font-size:12px;color:#217346;font-weight:bold;">17</div>
<div class="r" style="left:5.00px;top:556.30px;width:32.30px;height:1.00px;background:#c3c3c3;"></div>
<div class="t" style="left:14.49px;top:542.09px;font-size:12px;color:#217346;font-weight:bold;">18</div>
<div class="r" style="left:5.00px;top:574.55px;width:32.30px;height:1.00px;background:#c3c3c3;"></div>
<div class="t" style="left:14.49px;top:560.34px;font-size:12px;color:#217346;font-weight:bold;">19</div>
<div class="r" style="left:5.00px;top:592.80px;width:32.30px;height:1.00px;background:#c3c3c3;"></div>
<div class="t" style="left:14.49px;top:578.59px;font-size:12px;color:#217346;font-weight:bold;">20</div>
<div class="r" style="left:5.00px;top:611.05px;width:32.30px;height:1.00px;background:#c3c3c3;"></div>
<div class="t" style="left:14.49px;top:596.84px;font-size:12px;color:#217346;font-weight:bold;">21</div>
<div class="r" style="left:5.00px;top:629.30px;width:32.30px;height:1.00px;background:#c3c3c3;"></div>
<div class="t" style="left:14.49px;top:615.09px;font-size:12px;color:#217346;font-weight:bold;">22</div>
<div class="r" style="left:5.00px;top:647.55px;width:32.30px;height:1.00px;background:#c3c3c3;"></div>
<div class="t" style="left:14.49px;top:633.34px;font-size:12px;color:#217346;font-weight:bold;">23</div>
<div class="r" style="left:5.00px;top:665.80px;width:32.30px;height:1.00px;background:#c3c3c3;"></div>
<div class="t" style="left:14.49px;top:651.59px;font-size:12px;color:#217346;font-weight:bold;">24</div>
<div class="r" style="left:36.70px;top:228.30px;width:1.50px;height:427.70px;background:#217346;"></div>
<div class="r" style="left:634.91px;top:247.05px;width:50.37px;height:409.45px;background:#c8c8c8;"></div>
<div class="r" style="left:634.91px;top:264.30px;width:50.37px;height:1.00px;background:#b4b4b4;"></div>
<div class="r" style="left:634.91px;top:282.55px;width:50.37px;height:1.00px;background:#b4b4b4;"></div>
<div class="r" style="left:634.91px;top:300.80px;width:50.37px;height:1.00px;background:#b4b4b4;"></div>
<div class="r" style="left:634.91px;top:319.05px;width:50.37px;height:1.00px;background:#b4b4b4;"></div>
<div class="r" style="left:634.91px;top:337.30px;width:50.37px;height:1.00px;background:#b4b4b4;"></div>
<div class="r" style="left:634.91px;top:355.55px;width:50.37px;height:1.00px;background:#b4b4b4;"></div>
<div class="r" style="left:634.91px;top:373.80px;width:50.37px;height:1.00px;background:#b4b4b4;"></div>
<div class="r" style="left:634.91px;top:392.05px;width:50.37px;height:1.00px;background:#b4b4b4;"></div>
<div class="r" style="left:634.91px;top:410.30px;width:50.37px;height:1.00px;background:#b4b4b4;"></div>
<div class="r" style="left:634.91px;top:428.55px;width:50.37px;height:1.00px;background:#b4b4b4;"></div>
<div class="r" style="left:634.91px;top:446.80px;width:50.37px;height:1.00px;background:#b4b4b4;"></div>
<div class="r" style="left:634.91px;top:465.05px;width:50.37px;height:1.00px;background:#b4b4b4;"></div>
<div class="r" style="left:634.91px;top:483.30px;width:50.37px;height:1.00px;background:#b4b4b4;"></div>
<div class="r" style="left:634.91px;top:501.55px;width:50.37px;height:1.00px;background:#b4b4b4;"></div>
<div class="r" style="left:634.91px;top:519.80px;width:50.37px;height:1.00px;background:#b4b4b4;"></div>
<div class="r" style="left:634.91px;top:538.05px;width:50.37px;height:1.00px;background:#b4b4b4;"></div>
<div class="r" style="left:634.91px;top:556.30px;width:50.37px;height:1.00px;background:#b4b4b4;"></div>
<div class="r" style="left:634.91px;top:574.55px;width:50.37px;height:1.00px;background:#b4b4b4;"></div>
<div class="r" style="left:634.91px;top:592.80px;width:50.37px;height:1.00px;background:#b4b4b4;"></div>
<div class="r" style="left:634.91px;top:611.05px;width:50.37px;height:1.00px;background:#b4b4b4;"></div>
<div class="r" style="left:634.91px;top:629.30px;width:50.37px;height:1.00px;background:#b4b4b4;"></div>
<div class="r" style="left:634.91px;top:647.55px;width:50.37px;height:1.00px;background:#b4b4b4;"></div>
<div class="r" style="left:632.11px;top:227.00px;width:1.50px;height:429.00px;background:#217346;"></div>
<div class="r" style="left:686.28px;top:227.00px;width:1.50px;height:429.00px;background:#217346;"></div>
<div class="r" style="left:632.11px;top:227.00px;width:55.17px;height:1.50px;background:#217346;"></div>
<div class="t" style="left:40.90px;top:232.89px;font-size:12.3px;color:#2e2e2e;font-weight:normal;letter-spacing:0.018px;">frequentietabel onderzoek 1</div>
<div class="r" style="left:40.90px;top:244.20px;width:158.00px;height:1.00px;background:#6a6a6a;"></div>
<div class="t" style="left:527.90px;top:232.89px;font-size:12.3px;color:#2e2e2e;font-weight:normal;letter-spacing:0.018px;">frequentietabel onderzoek 1</div>
<div class="r" style="left:527.90px;top:244.20px;width:158.00px;height:1.00px;background:#6a6a6a;"></div>
<div class="t" style="left:63.07px;top:269.64px;font-size:12px;color:#2e2e2e;font-weight:bold;">i</div>
<div class="t" style="left:107.03px;top:269.64px;font-size:12px;color:#2e2e2e;font-weight:bold;">kleur</div>
<div class="t" style="left:170.26px;top:269.64px;font-size:12px;color:#2e2e2e;font-weight:bold;">afi</div>
<div class="t" style="left:550.93px;top:269.64px;font-size:12px;color:#2e2e2e;font-weight:bold;">i</div>
<div class="t" style="left:591.94px;top:269.64px;font-size:12px;color:#2e2e2e;font-weight:bold;">kleur</div>
<div class="t" style="left:652.95px;top:269.64px;font-size:12px;color:#2e2e2e;font-weight:bold;">afi</div>
<div class="t" style="left:61.42px;top:287.89px;font-size:12px;color:#2e2e2e;font-weight:normal;">1</div>
<div class="t" style="left:104.69px;top:287.89px;font-size:12px;color:#2e2e2e;font-weight:normal;">oranje</div>
<div class="t" style="left:170.59px;top:287.89px;font-size:12px;color:#2e2e2e;font-weight:normal;">10</div>
<div class="t" style="left:549.27px;top:287.89px;font-size:12px;color:#2e2e2e;font-weight:normal;">1</div>
<div class="t" style="left:589.60px;top:287.89px;font-size:12px;color:#2e2e2e;font-weight:normal;">oranje</div>
<div class="t" style="left:653.28px;top:287.89px;font-size:12px;color:#2e2e2e;font-weight:normal;">10</div>
<div class="t" style="left:61.42px;top:306.14px;font-size:12px;color:#2e2e2e;font-weight:normal;">2</div>
<div class="t" style="left:110.03px;top:306.14px;font-size:12px;color:#2e2e2e;font-weight:normal;">geel</div>
<div class="t" style="left:170.59px;top:306.14px;font-size:12px;color:#2e2e2e;font-weight:normal;">10</div>
<div class="t" style="left:549.27px;top:306.14px;font-size:12px;color:#2e2e2e;font-weight:normal;">2</div>
<div class="t" style="left:594.94px;top:306.14px;font-size:12px;color:#2e2e2e;font-weight:normal;">geel</div>
<div class="t" style="left:653.28px;top:306.14px;font-size:12px;color:#2e2e2e;font-weight:normal;">10</div>
<div class="t" style="left:61.42px;top:324.39px;font-size:12px;color:#2e2e2e;font-weight:normal;">3</div>
<div class="t" style="left:105.69px;top:324.39px;font-size:12px;color:#2e2e2e;font-weight:normal;">blauw</div>
<div class="t" style="left:173.92px;top:324.39px;font-size:12px;color:#2e2e2e;font-weight:normal;">8</div>
<div class="t" style="left:549.27px;top:324.39px;font-size:12px;color:#2e2e2e;font-weight:normal;">3</div>
<div class="t" style="left:590.59px;top:324.39px;font-size:12px;color:#2e2e2e;font-weight:normal;">blauw</div>
<div class="t" style="left:656.61px;top:324.39px;font-size:12px;color:#2e2e2e;font-weight:normal;">8</div>
<div class="t" style="left:61.42px;top:342.64px;font-size:12px;color:#2e2e2e;font-weight:normal;">4</div>
<div class="t" style="left:109.38px;top:342.64px;font-size:12px;color:#2e2e2e;font-weight:normal;">rood</div>
<div class="t" style="left:173.92px;top:342.64px;font-size:12px;color:#2e2e2e;font-weight:normal;">5</div>
<div class="t" style="left:549.27px;top:342.64px;font-size:12px;color:#2e2e2e;font-weight:normal;">4</div>
<div class="t" style="left:594.28px;top:342.64px;font-size:12px;color:#2e2e2e;font-weight:normal;">rood</div>
<div class="t" style="left:656.61px;top:342.64px;font-size:12px;color:#2e2e2e;font-weight:normal;">5</div>
<div class="t" style="left:61.42px;top:360.89px;font-size:12px;color:#2e2e2e;font-weight:normal;">5</div>
<div class="t" style="left:108.03px;top:360.89px;font-size:12px;color:#2e2e2e;font-weight:normal;">bruin</div>
<div class="t" style="left:173.92px;top:360.89px;font-size:12px;color:#2e2e2e;font-weight:normal;">5</div>
<div class="t" style="left:549.27px;top:360.89px;font-size:12px;color:#2e2e2e;font-weight:normal;">5</div>
<div class="t" style="left:592.93px;top:360.89px;font-size:12px;color:#2e2e2e;font-weight:normal;">bruin</div>
<div class="t" style="left:656.61px;top:360.89px;font-size:12px;color:#2e2e2e;font-weight:normal;">5</div>
<div class="t" style="left:61.42px;top:379.14px;font-size:12px;color:#2e2e2e;font-weight:normal;">6</div>
<div class="t" style="left:106.02px;top:379.14px;font-size:12px;color:#2e2e2e;font-weight:normal;">groen</div>
<div class="t" style="left:173.92px;top:379.14px;font-size:12px;color:#2e2e2e;font-weight:normal;">4</div>
<div class="t" style="left:549.27px;top:379.14px;font-size:12px;color:#2e2e2e;font-weight:normal;">6</div>
<div class="t" style="left:590.92px;top:379.14px;font-size:12px;color:#2e2e2e;font-weight:normal;">groen</div>
<div class="t" style="left:656.61px;top:379.14px;font-size:12px;color:#2e2e2e;font-weight:normal;">4</div>
<div class="t" style="left:707.62px;top:269.64px;font-size:12px;color:#2e2e2e;font-weight:bold;">rfi</div>
<div class="t" style="left:582.00px;top:397.39px;font-size:12px;color:#2e2e2e;font-weight:normal;letter-spacing:-0.068px;">Totaal</div>
<div class="t" style="left:671.20px;top:397.39px;font-size:12px;color:#2e2e2e;font-weight:normal;letter-spacing:-0.920px;">42</div>
<div class="r" style="left:42.80px;top:423.30px;width:437.00px;height:233.70px;background:#fff;border:1px solid #d9d9d9;border-bottom:none;box-sizing:border-box;"></div>
<div class="t" style="left:199.80px;top:435.39px;font-size:15.6px;color:#595959;font-weight:normal;letter-spacing:0.220px;">Mijn zakje m&amp;m's</div>
<div class="r" style="left:97.50px;top:630.50px;width:368.30px;height:1.00px;background:#d9d9d9;"></div>
<div class="t" style="left:81.74px;top:626.43px;font-size:9.3px;color:#595959;font-weight:normal;">0</div>
<div class="r" style="left:97.50px;top:603.27px;width:368.30px;height:1.00px;background:#d9d9d9;"></div>
<div class="t" style="left:81.74px;top:599.19px;font-size:9.3px;color:#595959;font-weight:normal;">2</div>
<div class="r" style="left:97.50px;top:576.03px;width:368.30px;height:1.00px;background:#d9d9d9;"></div>
<div class="t" style="left:81.74px;top:571.96px;font-size:9.3px;color:#595959;font-weight:normal;">4</div>
<div class="r" style="left:97.50px;top:548.80px;width:368.30px;height:1.00px;background:#d9d9d9;"></div>
<div class="t" style="left:81.74px;top:544.73px;font-size:9.3px;color:#595959;font-weight:normal;">6</div>
<div class="r" style="left:97.50px;top:521.57px;width:368.30px;height:1.00px;background:#d9d9d9;"></div>
<div class="t" style="left:81.74px;top:517.49px;font-size:9.3px;color:#595959;font-weight:normal;">8</div>
<div class="r" style="left:97.50px;top:494.33px;width:368.30px;height:1.00px;background:#d9d9d9;"></div>
<div class="t" style="left:76.58px;top:490.26px;font-size:9.3px;color:#595959;font-weight:normal;">10</div>
<div class="r" style="left:97.50px;top:467.10px;width:368.30px;height:1.00px;background:#d9d9d9;"></div>
<div class="t" style="left:76.58px;top:463.03px;font-size:9.3px;color:#595959;font-weight:normal;">12</div>
<div class="r" style="left:118.39px;top:494.83px;width:19.60px;height:136.17px;background:#4472c4;"></div>
<div class="t" style="left:114.29px;top:638.43px;font-size:10px;color:#595959;font-weight:normal;">oranje</div>
<div class="r" style="left:179.77px;top:494.83px;width:19.60px;height:136.17px;background:#4472c4;"></div>
<div class="t" style="left:180.12px;top:638.43px;font-size:10px;color:#595959;font-weight:normal;">geel</div>
<div class="r" style="left:241.16px;top:522.07px;width:19.60px;height:108.93px;background:#4472c4;"></div>
<div class="t" style="left:237.88px;top:638.43px;font-size:10px;color:#595959;font-weight:normal;">blauw</div>
<div class="r" style="left:302.54px;top:562.92px;width:19.60px;height:68.08px;background:#4472c4;"></div>
<div class="t" style="left:302.34px;top:638.43px;font-size:10px;color:#595959;font-weight:normal;">rood</div>
<div class="r" style="left:363.93px;top:562.92px;width:19.60px;height:68.08px;background:#4472c4;"></div>
<div class="t" style="left:362.60px;top:638.43px;font-size:10px;color:#595959;font-weight:normal;">bruin</div>
<div class="r" style="left:425.31px;top:576.53px;width:19.60px;height:54.47px;background:#4472c4;"></div>
<div class="t" style="left:422.31px;top:638.43px;font-size:10px;color:#595959;font-weight:normal;">groen</div>
<div class="t" style="left:25.7px;top:545px;width:80px;text-align:center;font-size:10.4px;letter-spacing:0.1px;color:#595959;transform:rotate(-90deg);transform-origin:40px 5px">frequentie</div>
<div class="r" style="left:1261.30px;top:228.30px;width:13.70px;height:427.70px;background:#e6e6e6;"></div>
<div class="r" style="left:1261.30px;top:228.30px;width:13.70px;height:181.90px;background:#fff;border-left:1px solid #d9d9d9;border-bottom:1px solid #cfcfcf;box-sizing:border-box;"></div>
<div class="r" style="left:1261.30px;top:228.80px;width:13.70px;height:15.20px;background:#fff;border:1px solid #d4d4d4;box-sizing:border-box;"></div>
<svg style="left:1264.2px;top:233px" width="8" height="6"><path d="M4 0L8 6H0Z" fill="#666"/></svg>
<div class="r" style="left:1261.30px;top:641.70px;width:13.70px;height:14.30px;background:#fff;border:1px solid #d4d4d4;box-sizing:border-box;"></div>
<svg style="left:1264.2px;top:646px" width="8" height="6"><path d="M0 0H8L4 6Z" fill="#666"/></svg>
<div class="r" style="left:37.50px;top:656.00px;width:1224.00px;height:14.00px;background:#e6e6e6;"></div>
<div class="r" style="left:5.00px;top:656.00px;width:32.50px;height:14.00px;background:#f3f3f3;"></div>
<div class="r" style="left:39.00px;top:656.00px;width:432.00px;height:14.00px;background:#fff;border-top:1px solid #d4d4d4;border-bottom:1px solid #d4d4d4;border-right:1px solid #c8c8c8;box-sizing:border-box;"></div>
<div class="r" style="left:39.00px;top:656.00px;width:14.50px;height:14.00px;background:#fff;border:1px solid #d4d4d4;box-sizing:border-box;"></div>
<svg style="left:43.3px;top:659px" width="6" height="8"><path d="M6 0V8L0 4Z" fill="#666"/></svg>
<div class="r" style="left:1247.50px;top:656.00px;width:14.00px;height:14.00px;background:#fff;border:1px solid #d4d4d4;box-sizing:border-box;"></div>
<svg style="left:1251.7px;top:659px" width="6" height="8"><path d="M0 0V8L6 4Z" fill="#666"/></svg>
<div class="r" style="left:1261.30px;top:656.00px;width:13.70px;height:14.00px;background:#f3f3f3;"></div>
<div class="r" style="left:5.00px;top:670.00px;width:1270.00px;height:29.00px;background:#f3f3f3;"></div>
<div class="r" style="left:5.00px;top:699.00px;width:1270.00px;height:1.00px;background:#e3e3e3;"></div>
<svg style="left:17px;top:680px" width="6" height="10"><path d="M5.5 0.5L0.8 5L5.5 9.5" fill="none" stroke="#b3b3b3" stroke-width="1"/></svg>
<svg style="left:46.5px;top:680px" width="6" height="10"><path d="M0.5 0.5L5.2 5L0.5 9.5" fill="none" stroke="#b3b3b3" stroke-width="1"/></svg>
<svg style="left:72.5px;top:680px" width="11" height="10"><path d="M0 1H10.5M0 5H10.5M0 9H10.5" stroke="#444" stroke-width="1.2"/></svg>
<div class="t" style="left:102.50px;top:678.98px;font-size:11.6px;color:#333;font-weight:normal;-webkit-text-stroke:0.35px #333;letter-spacing:0.076px;">Blad1</div>
<div class="r" style="left:100.30px;top:696.60px;width:34.40px;height:2.60px;background:#217346;border-radius:1px;"></div>
<svg style="left:152px;top:679.5px" width="10.5" height="10.5"><path d="M5.25 0V10.5M0 5.25H10.5" stroke="#444" stroke-width="1.2"/></svg>
<div class="r" style="left:5.00px;top:700.00px;width:1270.00px;height:20.00px;background:#fff;"></div>
<div class="t" style="left:18.40px;top:706.57px;font-size:10.9px;color:#444444;font-weight:normal;letter-spacing:-0.074px;">Berekeningsmodus : Automatisch</div>
<div class="t" style="left:194.70px;top:706.57px;font-size:10.9px;color:#444444;font-weight:normal;letter-spacing:-0.055px;">Werkmapstatistieken</div>
<div class="t" style="left:782.30px;top:706.57px;font-size:10.9px;color:#444444;font-weight:normal;letter-spacing:-0.043px;">Gemiddelde: 12</div>
<div class="t" style="left:871.00px;top:706.57px;font-size:10.9px;color:#444444;font-weight:normal;letter-spacing:-0.100px;">Aantal: 8</div>
<div class="t" style="left:925.30px;top:706.57px;font-size:10.9px;color:#444444;font-weight:normal;letter-spacing:-0.267px;">Som: 84</div>
<svg style="left:977.4px;top:710.5px" width="6" height="4"><path d="M0.5 0.5L3 3L5.5 0.5" fill="none" stroke="#444" stroke-width="1.1"/></svg>
<div class="t" style="left:1022.00px;top:706.57px;font-size:10.9px;color:#444444;font-weight:normal;letter-spacing:-0.044px;">Geef feedback aan Microsoft</div>
<div class="r" style="left:1198.00px;top:710.80px;width:9.00px;height:1.10px;background:#444;"></div>
<div class="t" style="left:1217.00px;top:706.91px;font-size:10.5px;color:#444444;font-weight:normal;letter-spacing:-0.127px;">100%</div>
<svg style="left:1249.5px;top:706px" width="10" height="10"><path d="M5 0V10M0 5H10" stroke="#444" stroke-width="1.1"/></svg>
<svg style="left:745px;top:437px" width="9" height="14"><path d="M0.5 0.5V10.8L2.8 8.6L4.4 12.2L6 11.5L4.5 8H7.8Z" fill="#fff" stroke="#1a1a1a" stroke-width="1" stroke-linejoin="round"/></svg>
<div class="r" style="left:0.00px;top:0.00px;width:5.30px;height:720.00px;background:#000;"></div>
<div class="r" style="left:1274.80px;top:0.00px;width:5.20px;height:720.00px;background:#000;"></div>
</body></html>
